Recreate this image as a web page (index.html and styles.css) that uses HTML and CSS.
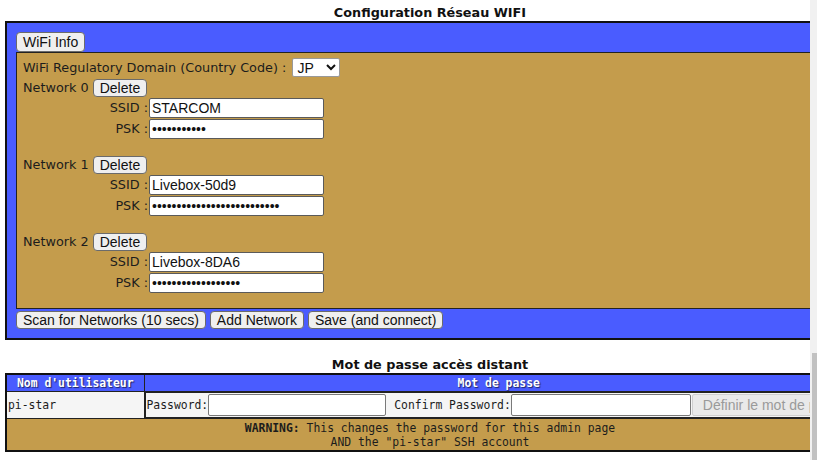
FILE: index.html
```html
<!DOCTYPE html>
<html lang="fr">
<head>
    <meta charset="UTF-8">
    <meta name="viewport" content="width=device-width, initial-scale=1.0">
    <title>Pi-Star - Configuration</title>
    <link rel="stylesheet" href="styles.css">
</head>
<body>
    <div class="screen">
        <div class="viewport">
            <div class="page">
                <h2 class="title">Configuration Réseau WIFI</h2>
                <div class="wifi-box">
                    <div class="bar-top"><button class="btn btn-info">WiFi Info</button></div>
                    <div class="panel">
                        <div class="line line-reg">WiFi Regulatory Domain (Country Code) : <select class="country"><option>JP</option></select></div>
                        <div class="network">
                            <div class="line">Network 0 <button class="btn">Delete</button></div>
                            <div class="field"><label>SSID :</label><input type="text" value="STARCOM"></div>
                            <div class="field"><label>PSK :</label><input type="password" value="abcdefghijk"></div>
                        </div>
                        <div class="network">
                            <div class="line">Network 1 <button class="btn">Delete</button></div>
                            <div class="field"><label>SSID :</label><input type="text" value="Livebox-50d9"></div>
                            <div class="field"><label>PSK :</label><input type="password" value="abcdefghijklmnopqrstuvwxyz"></div>
                        </div>
                        <div class="network">
                            <div class="line">Network 2 <button class="btn">Delete</button></div>
                            <div class="field"><label>SSID :</label><input type="text" value="Livebox-8DA6"></div>
                            <div class="field"><label>PSK :</label><input type="password" value="abcdefghijklmnopqr"></div>
                        </div>
                    </div>
                    <div class="bar-bottom">
                        <button class="btn">Scan for Networks (10 secs)</button>
                        <button class="btn">Add Network</button>
                        <button class="btn">Save (and connect)</button>
                    </div>
                </div>

                <h2 class="title title-second">Mot de passe accès distant</h2>
                <table class="pw-table">
                    <colgroup>
                        <col class="col-user">
                        <col>
                    </colgroup>
                    <tr>
                        <th>Nom d'utilisateur</th>
                        <th>Mot de passe</th>
                    </tr>
                    <tr class="row-data">
                        <td>pi-star</td>
                        <td class="pw-cell"><span>Password:</span><input type="password" class="pw-input"><span class="pw-label">Confirm Password:</span><input type="password" class="pw-input pw-confirm"><button class="btn-set">Définir le mot de passe</button></td>
                    </tr>
                    <tr class="row-warn">
                        <td colspan="2"><b>WARNING:</b> This changes the password for this admin page<br>AND the "pi-star" SSH account</td>
                    </tr>
                </table>
            </div>
        </div>
        <div class="scrollbar"><div class="thumb"></div></div>
    </div>
</body>
</html>
```

FILE: styles.css
```css
body {
    margin: 0;
    background: #fff;
    color: #1c1c1c;
    font-family: "DejaVu Sans", sans-serif;
    font-size: 12.8px;
}
.screen {
    display: flex;
    height: 460px;
    overflow: hidden;
}
.viewport {
    width: 810px;
    overflow: hidden;
}
.page {
    width: 850px;
    padding-left: 5px;
}
.title {
    margin: 0;
    padding-top: 5px;
    height: 16px;
    line-height: 16px;
    font-size: 12.8px;
    font-weight: bold;
    text-align: center;
    color: #111;
}
.title-second {
    margin-top: 17px;
    padding-top: 0;
}
.wifi-box {
    border: 2px solid #111;
    background: #4a5cff;
    padding: 9px;
}
.bar-top {
    display: flex;
}
.btn {
    font-family: "Liberation Sans", Arial, sans-serif;
    font-size: 14px;
    height: 18px;
    padding: 0 6px;
    border: 1px solid #6b6b6b;
    border-radius: 4px;
    background: #efefef;
    color: #111;
    line-height: 16px;
}
.btn-info {
    height: 20px;
}
.panel {
    background: #c49c4c;
    border: 1px solid #222;
    padding: 4px 6px 15px 6px;
}
.line {
    height: 19px;
    display: flex;
    align-items: center;
    white-space: pre;
}
.line-reg {
    height: 21px;
}
.country {
    height: 19px;
    width: 48px;
    margin-left: 2px;
    font-family: "Liberation Sans", Arial, sans-serif;
    font-size: 14px;
    border: 1px solid #999;
    border-radius: 2px;
    background: #fff;
    color: #111;
}
.network {
    margin-bottom: 16px;
}
.network:last-child {
    margin-bottom: 0;
}
.field {
    height: 21px;
    display: flex;
    align-items: center;
}
.field label {
    width: 125px;
    text-align: right;
}
.field input {
    box-sizing: border-box;
    width: 175px;
    height: 20px;
    margin: 0 0 0 1px;
    padding: 1px 2px;
    border: 1px solid #5a5a5a;
    border-radius: 2px;
    font-family: "Liberation Sans", Arial, sans-serif;
    font-size: 14px;
    color: #111;
}
.bar-bottom {
    display: flex;
    gap: 4px;
    margin-top: 2px;
}
.pw-table {
    width: 850px;
    table-layout: fixed;
    border-collapse: collapse;
    border: 2px solid #111;
    font-family: "DejaVu Sans Mono", monospace;
    font-size: 11.4px;
}
.col-user {
    width: 138px;
}
.pw-table th {
    height: 16px;
    padding: 0;
    background: #4a5cff;
    color: #fff;
    font-weight: bold;
    text-shadow: 1px 1px 1px rgba(0, 0, 0, 0.6);
    border: 1px solid #222;
    text-align: center;
}
.row-data td {
    height: 24px;
    padding: 0 0 0 1px;
    background: #f5f5f5;
    border: 1px solid #222;
    white-space: nowrap;
    overflow: hidden;
}
.pw-cell {
    display: flex;
    align-items: center;
}
.pw-label {
    margin-left: 8px;
}
.pw-input {
    box-sizing: border-box;
    width: 178px;
    height: 22px;
    margin: 0;
    border: 1px solid #7a7a7a;
    border-radius: 2px;
    background: #fff;
}
.pw-confirm {
    width: 180px;
}
.btn-set {
    height: 22px;
    margin-left: 1px;
    padding: 0 10px;
    border: 1px solid #cfcfcf;
    border-radius: 2px;
    background: #e9e9e9;
    color: #9a9a9a;
    font-family: "Liberation Sans", Arial, sans-serif;
    font-size: 14px;
    white-space: nowrap;
}
.row-warn td {
    height: 31px;
    padding: 0;
    background: #c49c4c;
    border: 1px solid #222;
    text-align: center;
    line-height: 14px;
    color: #1c1c1c;
}
.scrollbar {
    width: 7px;
    background: #f1f1f1;
    display: flex;
    flex-direction: column;
    justify-content: flex-end;
}
.thumb {
    width: 5px;
    height: 107px;
    margin-left: 2px;
    background: #c1c1c1;
}
```
